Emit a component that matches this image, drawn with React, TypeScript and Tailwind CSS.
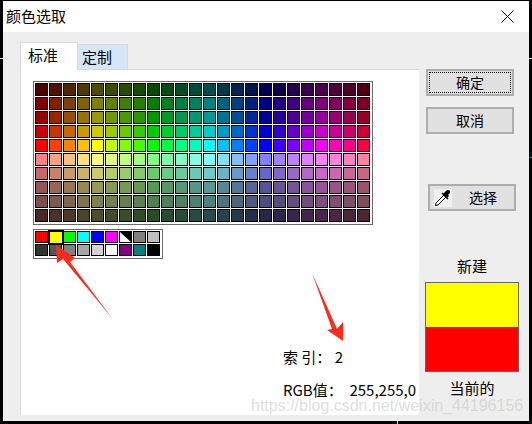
import React from "react";

function hsv(h: number, s: number, v: number) {
  const f = (n: number) => {
    const k = (n + h / 60) % 6;
    return Math.round(255 * (v - v * s * Math.max(0, Math.min(k, 4 - k, 1))));
  };
  return `rgb(${f(5)},${f(3)},${f(1)})`;
}

const rows: [number, number][] = [
  [1, 0.3],
  [1, 0.5],
  [1, 0.6],
  [1, 0.8],
  [1, 1],
  [0.5, 1],
  [0.5, 0.8],
  [0.45, 0.6],
  [0.4, 0.5],
  [0.5, 0.3],
];

const custom = [
  "#ff0000", "#ffff00", "#00ff00", "#00ffff", "#0000ff", "#ff00ff", "split", "#808080", "#c0c0c0",
  "#333333", "#555555", "#808080", "#a6a6a6", "#d4d4d4", "#ffffff", "#800080", "#008080", "#000000",
];

function Btn({ label, focus }: { label: string; focus?: boolean }) {
  return (
    <div
      className={
        "ml-[7px] flex h-[27px] w-[88px] items-center justify-center border-2 border-[#adadad] bg-[#e1e1e1] text-[14px] text-black " +
        (focus ? "outline-1 outline-dotted outline-black outline-offset-[-4px]" : "")
      }
    >
      {label}
    </div>
  );
}

export default function App() {
  return (
    <div className="relative h-[424px] w-[532px] overflow-hidden bg-black pb-[3px] pl-[3px] pr-[3px] pt-px font-['Noto_Sans_CJK_SC','Liberation_Sans',sans-serif] text-black">
      <div className="flex h-full flex-col">
        <div className="flex h-[31px] shrink-0 items-center justify-between bg-white pl-[3px] pr-[15px] text-[15px]">
          <span>颜色选取</span>
          <svg width="13" height="13" viewBox="0 0 13 13" stroke="#111" strokeWidth="1" fill="none">
            <path d="M0.5 0.5L12.5 12.5M12.5 0.5L0.5 12.5" />
          </svg>
        </div>

        <div className="flex min-h-0 flex-1 bg-[#eeeeee] pl-[17px]">
          <div className="flex w-[399px] flex-col pb-[6px] pt-[10px]">
            <div className="relative z-10 -mb-px flex h-[28px] shrink-0 items-end text-[15px]">
              <div className="flex h-[28px] w-[58px] items-start justify-start border border-b-0 border-[#d9d9d9] bg-white pl-[7px] leading-[24px]">
                标准
              </div>
              <div className="mb-px flex h-[25px] w-[50px] items-center justify-start border border-l-0 border-b-0 border-[#d9d9d9] bg-[#d5e6f7] pl-[4px]">
                定制
              </div>
            </div>
            <div className="min-h-0 flex-1 border-l border-t border-[#d9d9d9] bg-white pl-[12px] pt-[11px]">
              <div className="grid w-[340px] grid-cols-[repeat(24,14px)] border border-[#6a6a6a] bg-white p-px">
                {rows.flatMap(([s, v], r) =>
                  Array.from({ length: 24 }, (_, c) => (
                    <div key={`${r}-${c}`} className="h-[14px] w-[14px] bg-white pb-px pr-px">
                      <div
                        className="h-[13px] w-[13px] border border-black"
                        style={{ backgroundColor: hsv(c * 15, s, v) }}
                      />
                    </div>
                  ))
                )}
              </div>

              <div className="mt-[4px] grid w-[130px] grid-cols-[repeat(9,14px)] border border-[#6a6a6a] bg-white p-px">
                {custom.map((col, i) => (
                  <div key={i} className="relative h-[13px] w-[14px] pb-px pr-px">
                    {col === "split" ? (
                      <svg width="13" height="12" viewBox="0 0 13 12" className="block">
                        <rect width="13" height="12" fill="#000" />
                        <path d="M1 1L12 11H1Z" fill="#fff" />
                      </svg>
                    ) : i === 1 ? (
                      <div className="-ml-px -mt-px h-[15px] w-[16px] border-2 border-black" style={{ backgroundColor: col }} />
                    ) : (
                      <div className="h-[12px] w-[13px] border border-black" style={{ backgroundColor: col }} />
                    )}
                  </div>
                ))}
              </div>

              <div className="ml-[250px] mt-[87px] h-[22px] whitespace-pre text-[15px] leading-[22px]">索 引： 2</div>
              <div className="ml-[250px] mt-[11px] h-[22px] whitespace-pre text-[15px] leading-[22px]">RGB值：  255,255,0</div>
            </div>
          </div>

          <div className="flex w-[110px] flex-col pt-[37px]">
            <Btn label="确定" focus />
            <div className="mt-[11px]">
              <Btn label="取消" />
            </div>
            <div className="ml-[9px] mt-[50px] flex h-[27px] w-[88px] items-center border-2 border-[#adadad] bg-[#e1e1e1] pl-[4px] text-[14px]">
              <svg width="18" height="18" viewBox="0 0 18 18" className="shrink-0 bg-[#f0f0f0]">
                <path d="M1.5 16.5L2 14L10 6L12 8L4 16Z" fill="#fff" stroke="#000" strokeWidth="1" />
                <path d="M9 5L11 3L12.5 1.5Q14 0.5 15.5 1.5Q16.5 3 15.5 4.5L14 6L15 7L13.5 8.5L7.5 3.5L9 5Z" fill="#000" />
                <path d="M8 4L14 10" stroke="#000" strokeWidth="1.5" />
              </svg>
              <span className="ml-[17px]">选择</span>
            </div>
            <div className="ml-[6px] mt-[44px] h-[22px] w-[94px] text-center text-[15px] leading-[22px]">新建</div>
            <div className="ml-[6px] mt-[5px] h-[90px] w-[94px] shrink-0 border border-[#666666]">
              <div className="h-1/2 bg-[#ffff00]" />
              <div className="h-1/2 bg-[#ff0000]" />
            </div>
            <div className="ml-[6px] mt-[5px] h-[22px] w-[94px] text-center text-[15px] leading-[22px]">当前的</div>
          </div>
        </div>
      </div>

      <svg className="pointer-events-none absolute left-0 top-0" width="532" height="424" viewBox="0 0 532 424">
        <polygon points="112,318 70,262 75,258 56,245 57,263 63,259" fill="#fb2a1b" />
        <polygon points="312,273 337,329 343,322 343,341 327,330 332,329" fill="#fb2a1b" />
        <rect x="0" y="58" width="3" height="1" fill="#ddd" />
        <rect x="529" y="58" width="3" height="1" fill="#ddd" />
        <rect x="529" y="157" width="3" height="1" fill="#c33" />
        <rect x="397" y="421" width="1" height="3" fill="#ddd" />
      </svg>

      <div className="pointer-events-none absolute left-[251px] top-[395px] whitespace-nowrap font-['Liberation_Sans',sans-serif] text-[16px] leading-[22px] text-[#c8c8c8]/60">
        https://blog.csdn.net/weixin_44196156
      </div>
    </div>
  );
}
